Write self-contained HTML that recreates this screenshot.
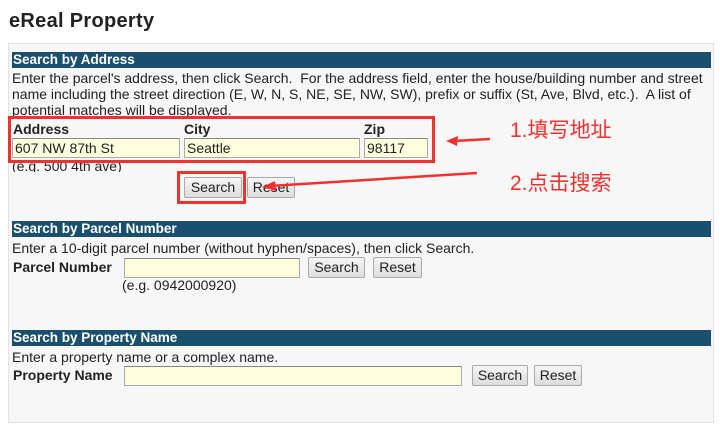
<!DOCTYPE html>
<html><head><meta charset="utf-8"><style>
body{margin:0;width:720px;height:435px;background:#fff;font-family:"Liberation Sans",Arial,sans-serif;position:relative;overflow:hidden;color:#222}
.a{position:absolute;white-space:nowrap}
h1{position:absolute;left:9px;top:10px;margin:0;font-size:20px;font-weight:bold;color:#222;font-family:"Liberation Sans",sans-serif;letter-spacing:0.3px}
.panel{position:absolute;left:8px;top:43px;width:704px;height:378px;background:#f7f7f7;border:1px solid #e2e2e2}
.hd{position:absolute;left:12px;width:698px;height:16px;background:#1a4f6e;color:#fff;font-weight:bold;font-size:13.5px;line-height:16px;padding-left:1px}
.t{font-size:14px}
.in{position:absolute;background:#ffffe0;border:1px solid #aaa;border-top-color:#888;font-size:14px;line-height:18px;padding-left:2px;box-sizing:border-box;height:20px}
.btn{position:absolute;height:21px;border:1px solid #aaa;background:linear-gradient(#f6f6f6,#ddd);font-size:14px;line-height:19px;text-align:center;box-sizing:border-box;border-radius:2px}
.red{position:absolute;border:3px solid #f0312f;box-sizing:border-box}
.cn{position:absolute;color:#f0312f;font-size:21px;font-family:"Liberation Sans","Noto Sans CJK SC",sans-serif;white-space:nowrap}
</style></head><body>
<h1>eReal Property</h1>
<div class="panel"></div>
<div class="hd" style="top:52px">Search by Address</div>
<div class="a t" style="left:12px;top:70px">Enter the parcel's address, then click Search.&nbsp; For the address field, enter the house/building number and street</div>
<div class="a t" style="left:12px;top:86px">name including the street direction (E, W, N, S, NE, SE, NW, SW), prefix or suffix (St, Ave, Blvd, etc.).&nbsp; A list of</div>
<div class="a t" style="left:12px;top:102px;height:14px;overflow:hidden">potential matches will be displayed.</div>
<div class="a t" style="left:13px;top:121px;font-weight:bold">Address</div>
<div class="a t" style="left:184px;top:121px;font-weight:bold">City</div>
<div class="a t" style="left:364px;top:121px;font-weight:bold">Zip</div>
<div class="in" style="left:12px;top:138px;width:168px">607 NW 87th St</div>
<div class="in" style="left:184px;top:138px;width:176px">Seattle</div>
<div class="in" style="left:364px;top:138px;width:64px">98117</div>
<div class="a t" style="left:12px;top:158px;height:14px;overflow:hidden">(e.g. 500 4th ave)</div>
<div class="btn" style="left:184px;top:177px;width:58px">Search</div>
<div class="btn" style="left:247px;top:177px;width:48px">Reset</div>
<div class="red" style="left:8px;top:116px;width:427px;height:47px"></div>
<div class="red" style="left:177px;top:171px;width:69px;height:33px"></div>
<svg class="a" style="left:0;top:0" width="720" height="435">
<path d="M490 139 L454 141" stroke="#f0312f" stroke-width="2.5"/><path d="M446 141 L458 136 L457 146 Z" fill="#f0312f"/>
<path d="M477 173 L270 186" stroke="#f0312f" stroke-width="2.5"/><path d="M262 187 L275 181 L276 191 Z" fill="#f0312f"/>
</svg>
<div class="cn" style="left:510px;top:114px">1.填写地址</div>
<div class="cn" style="left:510px;top:167px">2.点击搜索</div>
<div class="hd" style="top:221px">Search by Parcel Number</div>
<div class="a t" style="left:12px;top:240px">Enter a 10-digit parcel number (without hyphen/spaces), then click Search.</div>
<div class="a t" style="left:13px;top:259px;font-weight:bold">Parcel Number</div>
<div class="in" style="left:124px;top:258px;width:176px"></div>
<div class="btn" style="left:308px;top:257px;width:57px">Search</div>
<div class="btn" style="left:373px;top:257px;width:49px">Reset</div>
<div class="a t" style="left:122px;top:277px">(e.g. 0942000920)</div>
<div class="hd" style="top:330px">Search by Property Name</div>
<div class="a t" style="left:12px;top:349px">Enter a property name or a complex name.</div>
<div class="a t" style="left:13px;top:367px;font-weight:bold">Property Name</div>
<div class="in" style="left:124px;top:366px;width:338px"></div>
<div class="btn" style="left:472px;top:365px;width:56px">Search</div>
<div class="btn" style="left:534px;top:365px;width:48px">Reset</div>
</body></html>
